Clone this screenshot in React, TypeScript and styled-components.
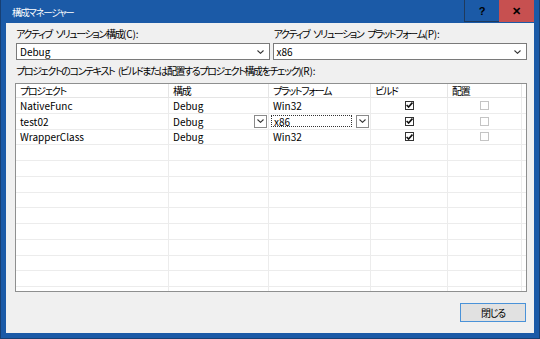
import { Fragment } from "react";
import styled, { createGlobalStyle } from "styled-components";

const GlobalStyle = createGlobalStyle`
  html, body {
    margin: 0;
    padding: 0;
  }
  body {
    font-family: "Noto Sans CJK JP", "Noto Sans", sans-serif;
    font-size: 10px;
    color: #000;
    font-feature-settings: "palt";
  }
`;

const Window = styled.div`
  width: 540px;
  height: 339px;
  box-sizing: border-box;
  background: #1b5aa7;
  border: 1px solid #173f73;
  border-top: none;
  display: flex;
  flex-direction: column;
  overflow: hidden;
`;

const TitleBar = styled.div`
  height: 23px;
  flex: none;
  display: flex;
  padding-right: 5px;
`;

const Title = styled.div`
  flex: 1;
  color: #fff;
  padding-left: 11px;
  font-size: 9.5px;
  letter-spacing: -1.3px;
  display: flex;
  align-items: center;
`;

const CaptionButton = styled.div<{ $close?: boolean }>`
  width: 35px;
  height: 22px;
  box-sizing: border-box;
  display: flex;
  align-items: center;
  justify-content: center;
  font-family: "Liberation Sans", sans-serif;
  font-weight: bold;
  font-size: 11px;
  background: ${(p) => (p.$close ? "#c75050" : "transparent")};
  border: ${(p) => (p.$close ? "none" : "1px solid #203a5c")};
  border-top: none;
  border-right: none;
`;

const Client = styled.div`
  flex: 1 1 0;
  min-height: 0;
  margin: 0 5px 5px 5px;
  background: #f0f0f0;
  padding: 3px 7px 11px 9px;
  display: flex;
  flex-direction: column;
`;

const TopRow = styled.div`
  display: grid;
  grid-template-columns: 1fr 1fr;
  column-gap: 3px;
`;

const Field = styled.div`
  display: flex;
  flex-direction: column;
`;

const Label = styled.div`
  line-height: 16px;
  padding-left: 1px;
  letter-spacing: -1.4px;
  word-spacing: 3px;
  white-space: nowrap;
`;

const Key = styled.span`
  letter-spacing: -0.2px;
`;

const Combo = styled.div<{ $inset?: boolean }>`
  height: 17px;
  box-sizing: border-box;
  margin-top: 1px;
  margin-left: ${(p) => (p.$inset ? "1px" : "0")};
  border: 1px solid #7a7a7a;
  background: #fff;
  display: flex;
  align-items: center;
  padding: 0 5px 0 3px;
`;

const ComboText = styled.span`
  flex: 1;
`;

const ContextLabel = styled(Label)`
  margin-top: 3px;
  margin-bottom: 4px;
`;

const Table = styled.div`
  flex: 1 1 0;
  min-height: 0;
  border: 1px solid #8e8f8f;
  background: #fff;
  overflow: hidden;
`;

const Grid = styled.div`
  display: grid;
  grid-template-columns: 153px 100px 102px 77px 74px 1fr;
`;

const HeadCell = styled.div`
  height: 14px;
  box-sizing: border-box;
  border-right: 1px solid #e5e5e5;
  border-bottom: 1px solid #e5e5e5;
  padding-left: 4px;
  line-height: 13px;
  letter-spacing: -1.3px;
  white-space: nowrap;
`;

const Cell = styled.div<{ $center?: boolean }>`
  height: 15.75px;
  box-sizing: border-box;
  border-right: 1px solid #ececec;
  border-bottom: 1px solid #ececec;
  padding-left: ${(p) => (p.$center ? "0" : "4px")};
  display: flex;
  align-items: center;
  justify-content: ${(p) => (p.$center ? "center" : "flex-start")};
  white-space: nowrap;
`;

const Filler = styled.div`
  border-bottom: 1px solid #ececec;
`;

const CellText = styled.span`
  flex: 1;
`;

const FocusBox = styled.span`
  width: 81px;
  height: 12px;
  box-sizing: border-box;
  border: 1px dotted #333;
  margin-left: -2px;
  padding-left: 2px;
  display: flex;
  align-items: center;
`;

const DropButton = styled.span<{ $gap?: number }>`
  width: 13px;
  height: 13px;
  box-sizing: border-box;
  border: 1px solid #8a8a8a;
  background: #fff;
  margin-left: ${(p) => p.$gap ?? 0}px;
  margin-right: 1px;
  display: flex;
  align-items: center;
  justify-content: center;
`;

const Check = styled.span<{ $on?: boolean }>`
  width: 9px;
  height: 9px;
  box-sizing: border-box;
  border: 1px solid ${(p) => (p.$on ? "#333" : "#c4c4c4")};
  background: #fff;
  display: flex;
  align-items: center;
  justify-content: center;
`;

const Footer = styled.div`
  flex: none;
  display: flex;
  justify-content: flex-end;
  margin-top: 11px;
  padding-right: 1px;
`;

const Button = styled.button`
  width: 66px;
  height: 19px;
  box-sizing: border-box;
  background: #e1e1e1;
  border: 1px solid #4a92d8;
  font-family: "Noto Sans CJK JP", sans-serif;
  font-size: 10px;
  font-feature-settings: "palt";
  letter-spacing: -1.3px;
  padding: 0;
  color: #000;
`;

const Chevron = () => (
  <svg width="7" height="4" viewBox="0 0 7 4">
    <polyline points="0.5,0.5 3.5,3.3 6.5,0.5" fill="none" stroke="#333" strokeWidth="1.1" />
  </svg>
);

const Tick = () => (
  <svg width="7" height="6" viewBox="0 0 7 6">
    <polyline points="0.6,3 2.6,5 6.4,0.6" fill="none" stroke="#111" strokeWidth="1.6" />
  </svg>
);

type Row = { project: string; config: string; platform: string; editing?: boolean };

const rows: Row[] = [
  { project: "NativeFunc", config: "Debug", platform: "Win32" },
  { project: "test02", config: "Debug", platform: "x86", editing: true },
  { project: "WrapperClass", config: "Debug", platform: "Win32" },
];

const headers = ["プロジェクト", "構成", "プラットフォーム", "ビルド", "配置"];

export default function App() {
  const blanks = Array.from({ length: 11 }, (_, i) => i);
  return (
    <>
      <GlobalStyle />
      <Window>
        <TitleBar>
          <Title>構成マネージャー</Title>
          <CaptionButton>?</CaptionButton>
          <CaptionButton $close>✕</CaptionButton>
        </TitleBar>
        <Client>
          <TopRow>
            <Field>
              <Label>
                アクティブ ソリューション構成<Key>(C):</Key>
              </Label>
              <Combo $inset>
                <ComboText>Debug</ComboText>
                <Chevron />
              </Combo>
            </Field>
            <Field>
              <Label>
                アクティブ ソリューション プラットフォーム<Key>(P):</Key>
              </Label>
              <Combo>
                <ComboText>x86</ComboText>
                <Chevron />
              </Combo>
            </Field>
          </TopRow>
          <ContextLabel>
            プロジェクトのコンテキスト (ビルドまたは配置するプロジェクト構成をチェック)<Key>(R):</Key>
          </ContextLabel>
          <Table>
            <Grid>
              {headers.map((h) => (
                <HeadCell key={h}>{h}</HeadCell>
              ))}
              <HeadCell />
              {rows.map((r) => (
                <Fragment key={r.project}>
                  <Cell>{r.project}</Cell>
                  <Cell>
                    <CellText>{r.config}</CellText>
                    {r.editing && (
                      <DropButton>
                        <Chevron />
                      </DropButton>
                    )}
                  </Cell>
                  <Cell>
                    {r.editing ? (
                      <>
                        <FocusBox>{r.platform}</FocusBox>
                        <DropButton $gap={4}>
                          <Chevron />
                        </DropButton>
                      </>
                    ) : (
                      r.platform
                    )}
                  </Cell>
                  <Cell $center>
                    <Check $on>
                      <Tick />
                    </Check>
                  </Cell>
                  <Cell $center>
                    <Check />
                  </Cell>
                  <Filler />
                </Fragment>
              ))}
              {blanks.map((i) => (
                <Fragment key={i}>
                  <Cell />
                  <Cell />
                  <Cell />
                  <Cell />
                  <Cell />
                  <Filler />
                </Fragment>
              ))}
            </Grid>
          </Table>
          <Footer>
            <Button>閉じる</Button>
          </Footer>
        </Client>
      </Window>
    </>
  );
}
